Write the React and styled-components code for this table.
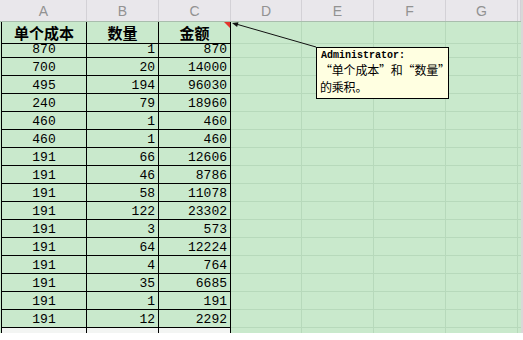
import React from "react"
import styled, { createGlobalStyle } from "styled-components"

const COLS = "86px 72px 72px 71px 72px 72px 72px 1fr"

const GlobalStyle = createGlobalStyle`
  html, body {
    margin: 0;
    padding: 0;
    background: #ffffff;
  }
  body {
    font-family: "Liberation Sans", Arial, sans-serif;
  }
`

const Page = styled.div`
  position: relative;
  width: 523px;
  height: 340px;
  overflow: hidden;
  background: #ffffff;
`

const Sheet = styled.div`
  width: 521px;
  height: 333px;
  overflow: hidden;
  background: #c9e9cc;
  border-right: 2px solid #d8d8d8;
`

const HeaderRow = styled.div`
  display: grid;
  grid-template-columns: ${COLS};
  height: 22px;
  box-sizing: border-box;
  padding-left: 1px;
  background: #e9e7eb;
  border-bottom: 1px solid #a9bdad;
`

const ColLabel = styled.div`
  display: flex;
  align-items: center;
  justify-content: center;
  border-right: 1px solid #d3d1d6;
  color: #929292;
  font-family: "Liberation Sans", Arial, sans-serif;
  font-size: 14px;
`

const Row = styled.div`
  display: grid;
  grid-template-columns: ${COLS};
  height: 18px;
  padding-left: 1px;
`

const Cell = styled.div`
  position: relative;
  box-sizing: border-box;
  display: flex;
  align-items: center;
  justify-content: ${({ $align }) => ($align === "right" ? "flex-end" : "center")};
  padding: 2px 3px 0;
  border-right: 1px solid ${({ $table }) => ($table ? "#000000" : "#b7d9bb")};
  border-bottom: 1px solid ${({ $table, $open }) => ($open ? "transparent" : $table ? "#000000" : "#b7d9bb")};
  border-left: ${({ $first }) => ($first ? "1px solid #000000" : "none")};
  background: ${({ $blank }) => ($blank ? "#f3f5f3" : "transparent")};
  color: #000000;
  font-family: "Liberation Mono", "Courier New", monospace;
  font-size: 13px;
  white-space: nowrap;

  ${({ $comment }) =>
    $comment &&
    `
    &::after {
      content: "";
      position: absolute;
      top: 0;
      right: 0;
      border-top: 6px solid #e3342c;
      border-left: 6px solid transparent;
    }
  `}
`

const TitleCell = styled(Cell)`
  padding-top: 0;
  font-family: "Noto Sans CJK SC", "Liberation Sans", sans-serif;
  font-weight: 700;
  font-size: 15px;
`

const Overlay = styled.svg`
  position: absolute;
  top: 0;
  left: 0;
  pointer-events: none;
`

const Note = styled.div`
  position: absolute;
  left: 316px;
  top: 47px;
  width: 133px;
  height: 52px;
  box-sizing: border-box;
  padding: 2px 0 0 3px;
  border: 1px solid #000000;
  background: #ffffe1;
  color: #000000;
`

const NoteAuthor = styled.div`
  padding-left: 1px;
  font-family: "Liberation Mono", "Courier New", monospace;
  font-weight: 700;
  font-size: 10px;
  line-height: 11px;
`

const NoteLine = styled.div`
  font-family: "Noto Sans CJK SC", sans-serif;
  font-size: 12px;
  line-height: 17px;
  letter-spacing: -0.2px;
  white-space: nowrap;
  font-feature-settings: "fwid";
`

const letters = ["A", "B", "C", "D", "E", "F", "G", ""]

const rows = [
  [870, 1, 870],
  [700, 20, 14000],
  [495, 194, 96030],
  [240, 79, 18960],
  [460, 1, 460],
  [460, 1, 460],
  [191, 66, 12606],
  [191, 46, 8786],
  [191, 58, 11078],
  [191, 122, 23302],
  [191, 3, 573],
  [191, 64, 12224],
  [191, 4, 764],
  [191, 35, 6685],
  [191, 1, 191],
  [191, 12, 2292],
]

// the empty green cells to the right of the table
const Filler = () => (
  <>
    <Cell />
    <Cell />
    <Cell />
    <Cell />
    <Cell />
  </>
)

export default function App() {
  return (
    <Page>
      <GlobalStyle />
      <Sheet>
        <HeaderRow>
          {letters.map((l, i) => (
            <ColLabel key={i}>{l}</ColLabel>
          ))}
        </HeaderRow>

        <Row>
          <TitleCell $table $first>单个成本</TitleCell>
          <TitleCell $table>数量</TitleCell>
          <TitleCell $table $comment>金额</TitleCell>
          <Filler />
        </Row>

        {rows.map(([cost, qty, total], i) => (
          <Row key={i}>
            <Cell $table $first>{cost}</Cell>
            <Cell $table $align="right">{qty}</Cell>
            <Cell $table $align="right">{total}</Cell>
            <Filler />
          </Row>
        ))}

        <Row>
          <Cell $table $first $blank $open />
          <Cell $table $blank $open />
          <Cell $table $blank $open />
          <Filler />
        </Row>
      </Sheet>

      <Overlay width="523" height="340" viewBox="0 0 523 340">
        <line x1="316" y1="47" x2="236" y2="24" stroke="#111" strokeWidth="1" />
        <polygon points="232,23 237.1,27 238.5,22.2" fill="#111" />
      </Overlay>

      <Note>
        <NoteAuthor>Administrator:</NoteAuthor>
        <NoteLine>“单个成本”和“数量”</NoteLine>
        <NoteLine>的乘积。</NoteLine>
      </Note>
    </Page>
  )
}
